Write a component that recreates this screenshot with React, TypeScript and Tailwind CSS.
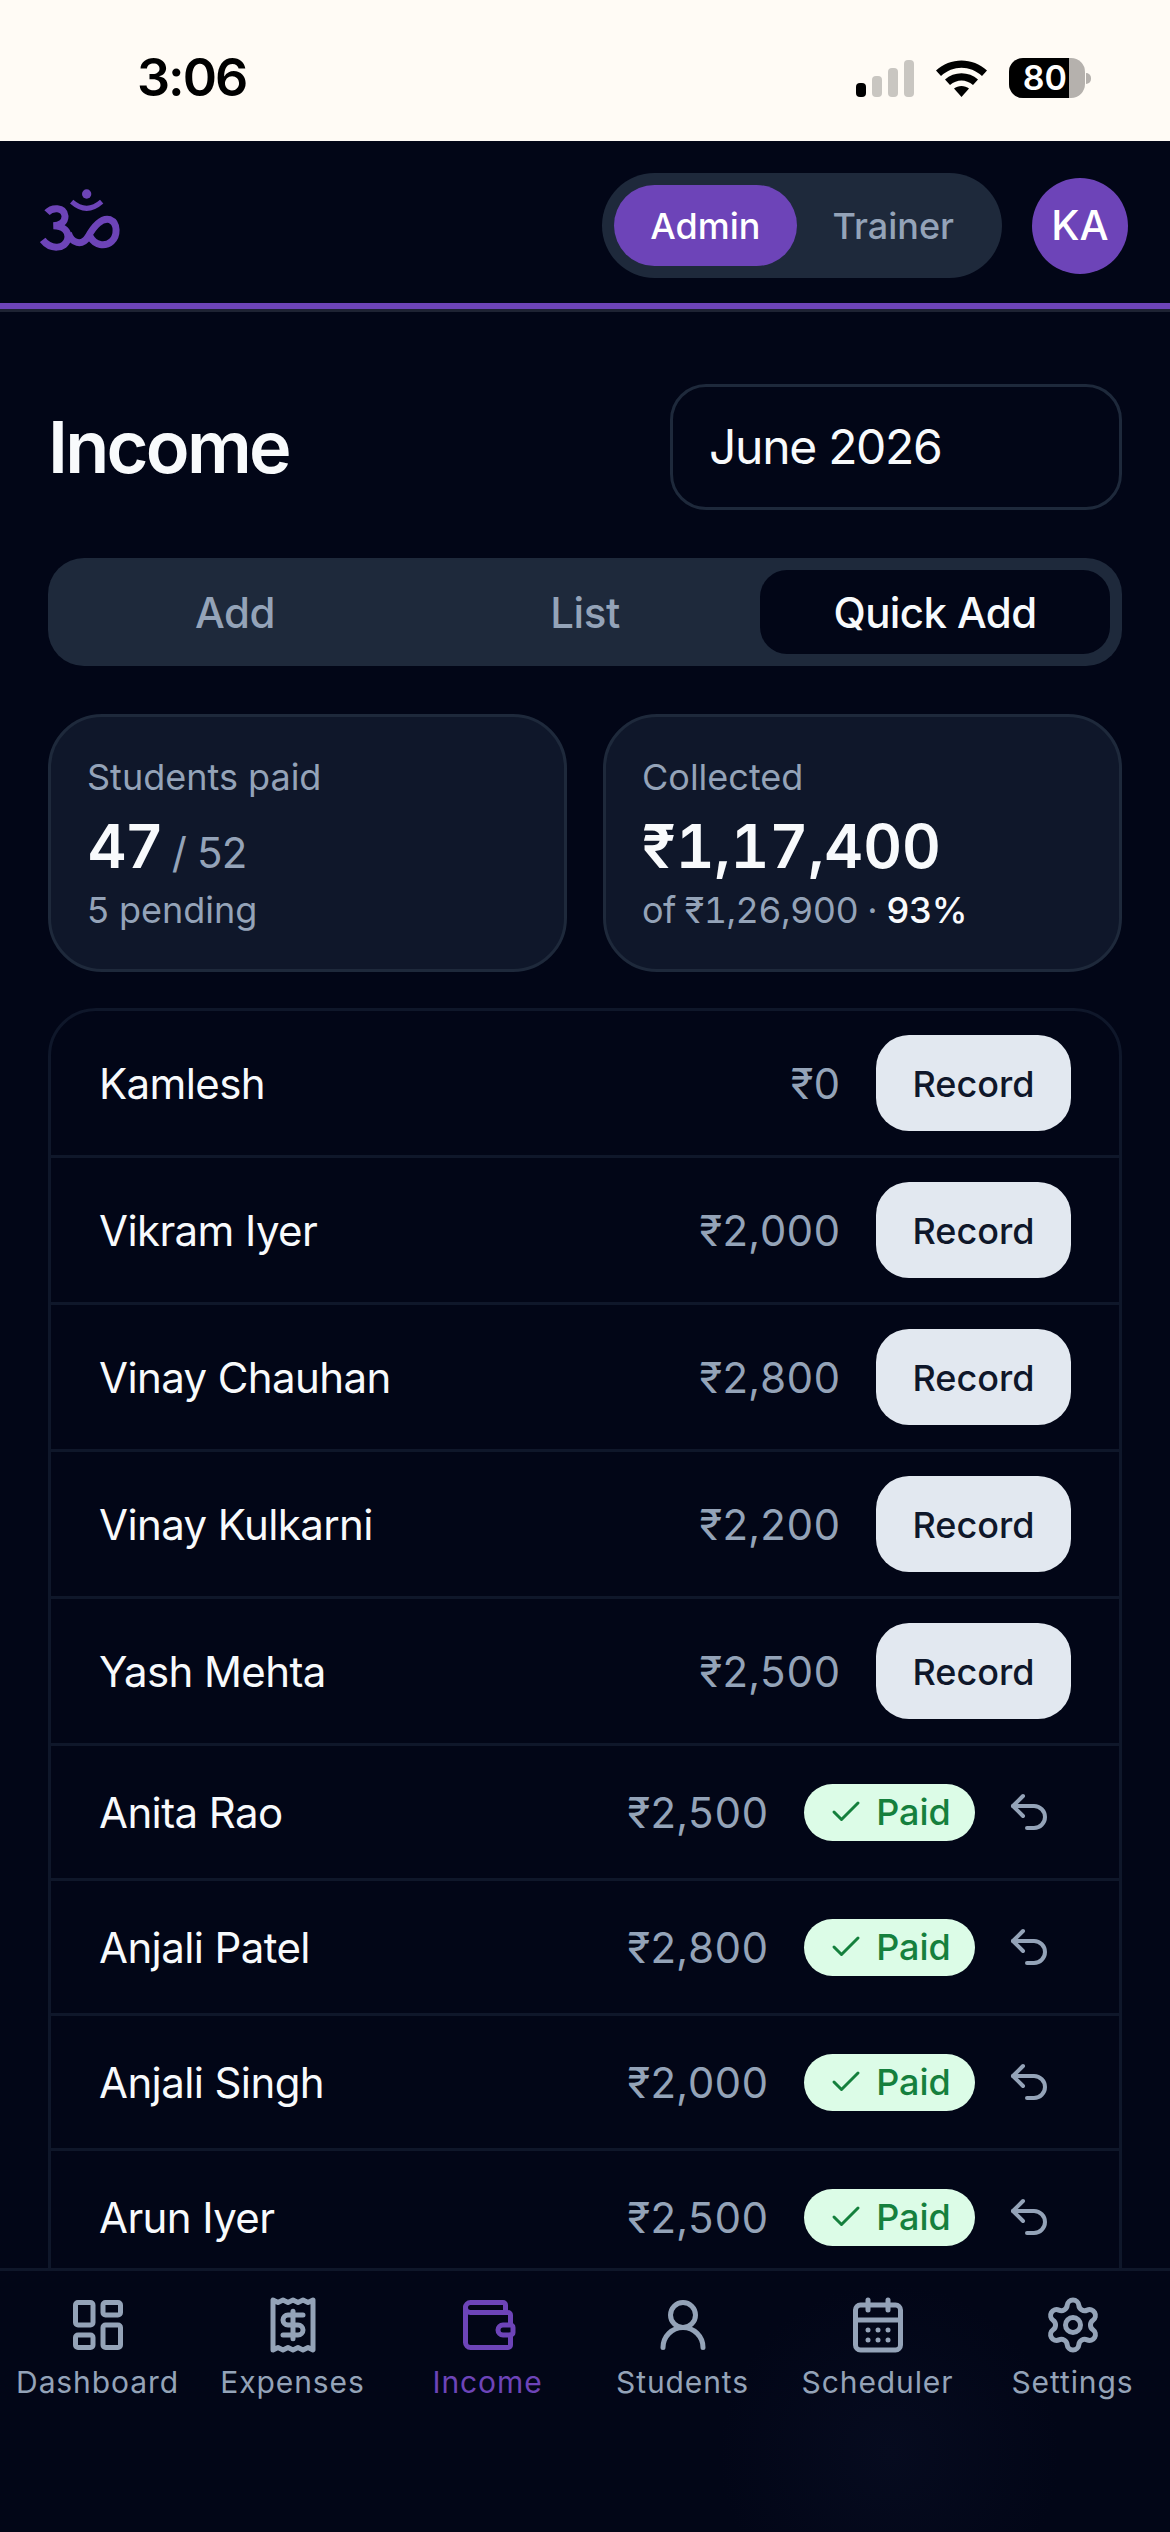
import { Check, LayoutDashboard, Receipt, Wallet, UserRound, CalendarDays, Settings, Undo2 } from "lucide-react";

const pending = [
  ["Kamlesh", "₹0"],
  ["Vikram Iyer", "₹2,000"],
  ["Vinay Chauhan", "₹2,800"],
  ["Vinay Kulkarni", "₹2,200"],
  ["Yash Mehta", "₹2,500"],
];
const paid = [
  ["Anita Rao", "₹2,500"],
  ["Anjali Patel", "₹2,800"],
  ["Anjali Singh", "₹2,000"],
  ["Arun Iyer", "₹2,500"],
];
const nav = [
  { label: "Dashboard", Icon: LayoutDashboard },
  { label: "Expenses", Icon: Receipt },
  { label: "Income", Icon: Wallet, active: true },
  { label: "Students", Icon: UserRound },
  { label: "Scheduler", Icon: CalendarDays },
  { label: "Settings", Icon: Settings },
];

function OmLogo() {
  return (
    <svg width="80" height="64" viewBox="120 145 240 192" fill="none" stroke="#6d44b8" strokeWidth="21" className="-mt-[11px]">
      <circle cx="260" cy="163" r="14" fill="#6d44b8" stroke="none" />
      <path d="M215 186 Q260 226 305 186" strokeWidth="15" />
      <path d="M141 219 C155 203 192 200 195 229 C196 250 178 257 160 258 C190 258 208 275 203 298 C196 328 152 332 128 301" />
      <path d="M205 280 C215 310 245 322 265 290 C280 262 305 232 330 240 C355 250 352 290 335 305 C315 322 285 318 270 290" />
    </svg>
  );
}

function StatusBar() {
  return (
    <div className="h-[141px] shrink-0 bg-[#fffbf5] flex items-center justify-between pl-[137px] pr-[79px] pt-[15px]">
      <span className="text-[52px] font-semibold text-black leading-none tracking-[-2px]">3:06</span>
      <div className="flex items-center">
        <svg width="58" height="37" viewBox="0 0 58 37" className="mr-[22px]">
          <rect x="0" y="23" width="10" height="14" rx="4" fill="#000" />
          <rect x="16" y="16" width="10" height="21" rx="4" fill="#c9c6c1" />
          <rect x="32" y="8" width="10" height="29" rx="4" fill="#c9c6c1" />
          <rect x="48" y="0" width="10" height="37" rx="4" fill="#c9c6c1" />
        </svg>
        <svg width="51" height="37" viewBox="0 0 51 37" className="mr-[22px]">
          <path d="M0 10.500 C14 -3 37 -3 51 10.500 L46 16 C34 5 17 5 5 16 Z" fill="#000" />
          <path d="M9 19.500 C18 11 33 11 42 19.500 L37 25 C30 19 21 19 14 25 Z" fill="#000" />
          <path d="M18 28.500 C22 25 29 25 33 28.500 L25.500 37 Z" fill="#000" />
        </svg>
        <div className="relative flex items-center">
          <div className="w-[76px] h-[40px] rounded-[14px] bg-[#b5b1ad] flex">
            <div className="w-[60px] h-full rounded-l-[14px] bg-black flex items-center justify-end pr-[2px]">
              <span className="text-[34px] font-semibold text-white leading-none">80</span>
            </div>
          </div>
          <div className="w-[5px] h-[11px] ml-[1px] rounded-r-full bg-[#b5b1ad]" />
        </div>
      </div>
    </div>
  );
}

function Header() {
  return (
    <div className="shrink-0 border-b-[3px] border-[#1e2333]">
      <div className="h-[168px] flex items-center justify-between pl-[40px] pr-[42px] pt-[7px] border-b-[6px] border-[#6d44b8]">
        <OmLogo />
        <div className="flex items-center gap-[30px]">
          <div className="h-[105px] rounded-full bg-[#1e293b] p-[12px] flex">
            <div className="h-[81px] px-[36px] rounded-full bg-[#6d44b8] text-white text-[36px] font-medium flex items-center">Admin</div>
            <div className="h-[81px] px-[36px] rounded-full text-[#94a3b8] text-[36px] font-medium flex items-center">Trainer</div>
          </div>
          <div className="w-[96px] h-[96px] rounded-full bg-[#6d44b8] text-white text-[41px] font-medium flex items-center justify-center">KA</div>
        </div>
      </div>
    </div>
  );
}

function Row({ name, children, tall }: { name: string; children: React.ReactNode; tall?: boolean }) {
  return (
    <div className={`${tall ? "h-[147px]" : "h-[135px]"} shrink-0 border-b-[3px] border-[#0f172a] pl-[48px] flex items-center justify-between`}>
      <span className="text-[42px] tracking-[-0.6px] text-[#f8fafc]">{name}</span>
      <div className="flex items-center">{children}</div>
    </div>
  );
}

export default function App() {
  return (
    <div className="w-[1170px] h-[2532px] bg-[#020617] flex flex-col overflow-hidden font-['Inter',sans-serif] text-white">
      <StatusBar />
      <Header />
      <main className="flex-1 min-h-0 overflow-hidden px-[48px] pt-[72px]">
        <div className="h-[126px] flex items-center justify-between">
          <h1 className="text-[72px] font-semibold tracking-[-2.7px] text-[#f8fafc]">Income</h1>
          <div className="w-[452px] h-[126px] rounded-[36px] border-[3px] border-[#1e293b] pl-[36px] flex items-center text-[48px] tracking-[-1.3px] text-[#f8fafc]">June 2026</div>
        </div>
        <div className="mt-[48px] h-[108px] rounded-[36px] bg-[#1e293b] p-[12px] grid grid-cols-3">
          <div className="flex items-center justify-center text-[42px] font-medium tracking-[-0.4px] text-[#94a3b8]">Add</div>
          <div className="flex items-center justify-center text-[42px] font-medium tracking-[-0.4px] text-[#94a3b8]">List</div>
          <div className="flex items-center justify-center rounded-[27px] bg-[#020617] text-[42px] font-medium tracking-[-0.6px] text-[#f8fafc]">Quick Add</div>
        </div>
        <div className="mt-[48px] grid grid-cols-2 gap-[36px]">
          <div className="h-[258px] rounded-[54px] border-[3px] border-[#1e293b] bg-[#0f172a] p-[36px]">
            <div className="text-[36px] leading-[48px] text-[#94a3b8]">Students paid</div>
            <div className="h-[84px] pt-[3px] text-[60px] leading-[84px] font-semibold text-[#f8fafc]">47 <span className="-ml-[5px] text-[42px] leading-none font-normal tracking-[-0.8px] text-[#94a3b8]">/ 52</span></div>
            <div className="mt-[1px] text-[36px] leading-[48px] text-[#94a3b8]">5 pending</div>
          </div>
          <div className="h-[258px] rounded-[54px] border-[3px] border-[#1e293b] bg-[#0f172a] p-[36px]">
            <div className="text-[36px] leading-[48px] text-[#94a3b8]">Collected</div>
            <div className="h-[84px] pt-[3px] text-[60px] leading-[84px] font-semibold tabular-nums text-[#f8fafc]">₹1,17,400</div>
            <div className="mt-[1px] text-[36px] leading-[48px] tabular-nums tracking-[-0.6px] text-[#94a3b8]">of ₹1,26,900 · <span className="font-medium text-[#f8fafc]">93%</span></div>
          </div>
        </div>
        <div className="mt-[36px] rounded-t-[48px] border-[3px] border-[#0f172a] flex flex-col">
          {pending.map(([name, amount]) => (
            <Row key={name} name={name} tall>
              <span className="text-[42px] text-[#94a3b8] tabular-nums tracking-[-0.4px] mr-[36px]">{amount}</span>
              <div className="w-[195px] h-[96px] pt-[2px] mr-[48px] rounded-[33px] bg-[#e2e8f0] text-[#0f172a] text-[36px] font-medium flex items-center justify-center">Record</div>
            </Row>
          ))}
          {paid.map(([name, amount]) => (
            <Row key={name} name={name}>
              <span className="text-[42px] text-[#94a3b8] tabular-nums tracking-[-0.4px] mr-[36px]">{amount}</span>
              <div className="w-[171px] h-[57px] rounded-full bg-[#dcfce7] text-[#15803d] text-[36px] font-medium flex items-center justify-center gap-[12px]">
                <Check size={36} strokeWidth={2} />
                <span>Paid</span>
              </div>
              <div className="w-[108px] mr-[36px] flex items-center justify-center">
                <Undo2 size={48} strokeWidth={2} className="text-[#94a3b8]" />
              </div>
            </Row>
          ))}
        </div>
      </main>
      <nav className="h-[264px] shrink-0 border-t-[3px] border-[#0f172a] bg-[radial-gradient(circle_at_76%_70%,#060b1f_0%,#020617_170px)] grid grid-cols-6 pt-[24px]">
        {nav.map(({ label, Icon, active }) => (
          <div key={label} className={`flex flex-col items-center ${active ? "text-[#6d44b8]" : "text-[#94a3b8]"}`}>
            <Icon size={60} strokeWidth={2} />
            <span className="mt-[12px] text-[30px] leading-[30px] tracking-[0.9px]">{label}</span>
          </div>
        ))}
      </nav>
    </div>
  );
}
